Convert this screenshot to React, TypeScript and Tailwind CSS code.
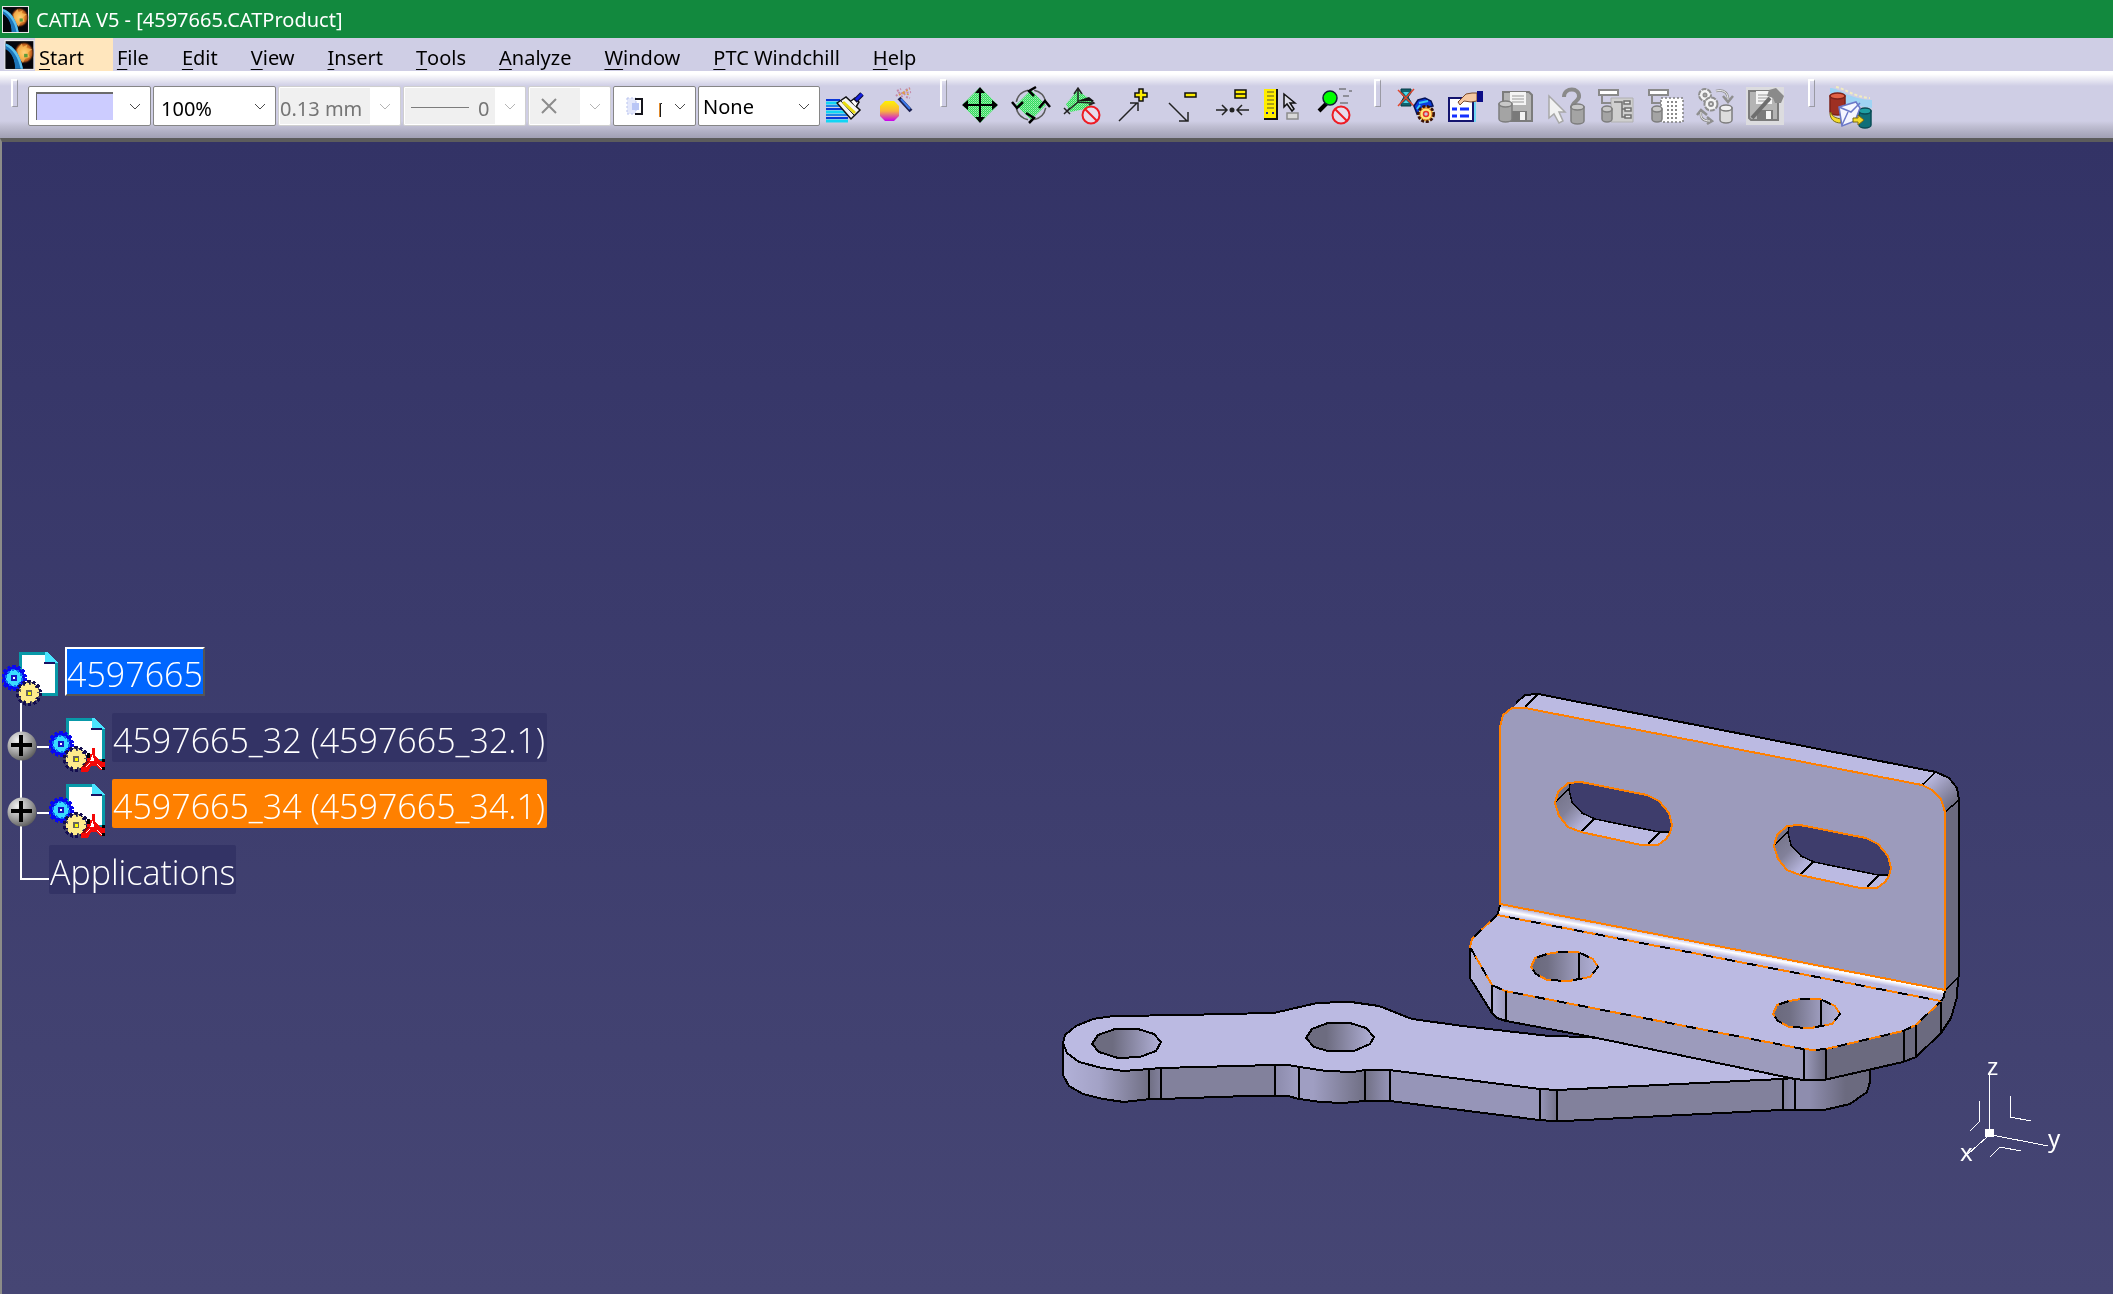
import type { ReactNode } from 'react';
import { clsx } from 'clsx';

const MENUS = [
  'File',
  'Edit',
  'View',
  'Insert',
  'Tools',
  'Analyze',
  'Window',
  'PTC Windchill',
  'Help',
];

function AppLogo({ className }: { className?: string }) {
  return (
    <svg viewBox="0 0 26 26" className={className} aria-hidden="true">
      <defs>
        <radialGradient id="burst">
          <stop offset="0" stopColor="#fff6c8" />
          <stop offset="0.4" stopColor="#f9a63a" />
          <stop offset="0.75" stopColor="#b4561a" />
          <stop offset="1" stopColor="#000000" stopOpacity="0" />
        </radialGradient>
      </defs>
      <rect width="26" height="26" fill="#e8e8e8" />
      <rect x="1" y="1" width="24" height="24" fill="#05060c" />
      <ellipse cx="17" cy="11" rx="9" ry="10" fill="url(#burst)" />
      <path d="M11 8l4-5 1 3 4-2-1 3 5 1-4 3 2 4-4 1-2 4-4-5z" fill="#fbc25e" opacity="0.7" />
      <path d="M1 3c7 2 13 10 15 22H9C9 17 6 11 1 8z" fill="#1d74b8" />
      <path d="M1 3c7 2 13 10 15 22h-2C12 15 7 8 1 5z" fill="#5cc0ee" />
      <path d="M1 8c5 3 8 9 8 17H1z" fill="#05060c" />
      <rect x="17" y="12" width="3" height="3" fill="#5e9c3a" />
    </svg>
  );
}

function MenuItem({ label, active }: { label: string; active?: boolean }) {
  return (
    <button
      type="button"
      className={clsx(
        'flex h-full items-center pt-[6px] pr-[29px] pl-1 text-[20px] leading-6 whitespace-pre text-black',
        active && 'bg-[#ffe6bd]',
      )}
    >
      <span className="underline decoration-1 underline-offset-[4px]">{label[0]}</span>
      {label.slice(1)}
    </button>
  );
}

function Grip({ className }: { className?: string }) {
  return (
    <span
      className={clsx(
        'mt-2 h-7 w-[7px] shrink-0 border-2 border-r border-b border-white border-r-[#9a9aa4] border-b-[#9a9aa4]',
        className,
      )}
    />
  );
}

type ComboProps = {
  label: string;
  value: string;
  width: string;
  disabled?: boolean;
  textClass?: string;
  children?: ReactNode;
};

function Combo({ label, value, width, disabled, textClass, children }: ComboProps) {
  return (
    <div
      className={clsx(
        'relative h-10 shrink-0 rounded-[2px] border bg-white',
        width,
        disabled ? 'border-[#cfcfcf]' : 'border-[#868686]',
      )}
    >
      <select
        aria-label={label}
        disabled={disabled}
        className={clsx(
          'h-full w-full appearance-none bg-transparent text-[20px] opacity-100 outline-none',
          disabled ? 'text-[#7c7c7c]' : 'text-black',
          textClass,
        )}
      >
        <option>{value}</option>
      </select>
      {disabled ? (
        <span className="pointer-events-none absolute inset-y-px right-[30px] left-px bg-[#f0f0f0] mix-blend-multiply" />
      ) : null}
      {children}
      <svg
        viewBox="0 0 12 8"
        className="pointer-events-none absolute top-4 right-[9px] h-2 w-3"
        fill="none"
        stroke={disabled ? '#b4b4b4' : '#4a4a4a'}
        aria-hidden="true"
      >
        <path d="M1 1l5 5 5-5" />
      </svg>
    </div>
  );
}

function Tool({ label, children }: { label: string; children: ReactNode }) {
  return (
    <button type="button" aria-label={label} className="mt-[13px] w-[50px] shrink-0">
      <svg viewBox="0 0 50 46" className="block h-[46px] w-[50px]" fill="none">
        {children}
      </svg>
    </button>
  );
}

function NoEntry() {
  return (
    <g stroke="#ee1c24" strokeWidth="2">
      <circle cx="36" cy="31" r="8.5" fill="#e6dcec" />
      <path d="M30 25l12 12" />
    </g>
  );
}

type CylinderProps = {
  x: number;
  y: number;
  w: number;
  h: number;
  fill?: string;
  top?: string;
  stroke?: string;
};

function Cylinder({ x, y, w, h, fill = '#a4a4a4', top = '#c8c8c8', stroke = '#7e7e7e' }: CylinderProps) {
  const r = w / 2;
  return (
    <g fill={fill} stroke={stroke} strokeWidth="1.5">
      <path d={`M${x} ${y + 3}v${h - 6}a${r} 3 0 0 0 ${w} 0v-${h - 6}z`} />
      <ellipse cx={x + r} cy={y + 3} rx={r} ry="3" fill={top} />
    </g>
  );
}

function Disk({ x = 12, y = 7 }: { x?: number; y?: number }) {
  return (
    <g transform={`translate(${x} ${y})`}>
      <path d="M1 1h26l3 3v26H3l-2-2z" fill="#b4b4b4" stroke="#7c7c7c" strokeWidth="2" />
      <path d="M8 1h16v13H8z" fill="#f4f4f4" />
      <path d="M10 5h12M10 8h12M10 11h12" stroke="#9a9a9a" />
      <path d="M9 20h16v10H9z" fill="#7a7a7a" />
      <path d="M18 21h5v8h-5z" fill="#f4f4f4" />
    </g>
  );
}

function TreeLines() {
  return (
    <>
      <path d="M9 6h19v5H9z" fill="#fff" stroke="#8a8a8a" strokeWidth="2" />
      <path d="M12 12v7h9" stroke="#8a8a8a" strokeWidth="2" />
    </>
  );
}

function Toolbar() {
  return (
    <div className="flex h-[67px] items-start overflow-hidden bg-[linear-gradient(#ffffff_0,#ffffff_3px,#cfcee5_15px,#cfcee5_50px,#bdbcd0_56px,#a3a2b6_66px)] pl-[11px]">
      <Grip className="mr-[10px]" />
      <div className="mt-[15px] flex gap-[2px]">
        <Combo label="Fill color" value="" width="w-[123px]">
          <span className="pointer-events-none absolute top-[5px] left-[7px] h-7 w-[77px] border-t-2 border-l border-[#6b6b6b] bg-[#ccccff]" />
        </Combo>
        <Combo label="Transparency" value="100%" width="w-[123px]" textClass="pl-[7px] pt-[6px]" />
        <Combo label="Line weight" value="0.13 mm" width="w-[123px]" disabled textClass="pl-px pt-[6px]" />
        <Combo label="Line type" value="0" width="w-[123px]" disabled textClass="pl-[74px] pt-[6px]">
          <span className="pointer-events-none absolute top-5 left-[7px] h-px w-[58px] bg-[#7c7c7c]" />
        </Combo>
        <Combo label="Point symbol" value="" width="w-[83px]" disabled>
          <svg
            viewBox="0 0 16 16"
            className="pointer-events-none absolute top-[11px] left-3 size-4"
            stroke="#8c8c8c"
            strokeWidth="2"
            aria-hidden="true"
          >
            <path d="M1 1l14 14M15 1L1 15" />
          </svg>
        </Combo>
        <Combo label="Rendering style" value="" width="w-[83px]">
          <svg
            viewBox="0 0 36 20"
            className="pointer-events-none absolute top-[10px] left-3 h-5 w-9"
            fill="none"
            aria-hidden="true"
          >
            <path d="M1 1h9v16H1z" fill="#e4e8fb" stroke="#b9c3ee" strokeDasharray="2 2" />
            <path d="M6 6h7v7H6z" fill="#b9c6f6" />
            <path d="M9 2h7v15H9" stroke="#15151c" strokeWidth="2" />
            <path d="M34.5 20V6.5h2" stroke="#1b1b1b" />
            <path d="M33.5 20V6" stroke="#e08a2c" />
          </svg>
        </Combo>
        <Combo label="Layer" value="None" width="w-[122px]" textClass="pl-1 pt-[2px]" />
      </div>
      <Tool label="Painter">
        <path d="M6 16h14M6 25h20M6 34h22" stroke="#0a36d8" strokeWidth="2" />
        <path d="M6 19h15M6 28h22M6 37h22" stroke="#12d5f4" strokeWidth="3" />
        <path d="M6 22h18M6 31h22" stroke="#1f86e8" strokeWidth="2" />
        <path d="M17 19l9-6 14 13-9 9z" fill="#f4f4f4" stroke="#111" strokeWidth="1.5" />
        <path d="M20 16l14 15" stroke="#111" />
        <path d="M23 18l12 11" stroke="#e9dc10" strokeWidth="3" />
        <path d="M31 17l4-3 4 4-3 5" fill="#fff" stroke="#111" strokeWidth="1.5" />
        <path d="M35 17L42 10" stroke="#0b0b30" strokeWidth="5" />
        <path d="M36 16L42 10" stroke="#1420e0" strokeWidth="3" />
      </Tool>
      <Tool label="Graphic properties wizard">
        <defs>
          <linearGradient id="ball" x1="0" y1="0" x2="0" y2="1">
            <stop offset="0" stopColor="#fff200" />
            <stop offset="0.5" stopColor="#f9b53c" />
            <stop offset="1" stopColor="#c800f0" />
          </linearGradient>
        </defs>
        <path d="M15 17h9l5 5v10l-5 5h-9l-5-5V22z" fill="url(#ball)" />
        <path d="M29 14L41 27" stroke="#1b2050" strokeWidth="4" />
        <path d="M31 15L40 25" stroke="#3d78e8" strokeWidth="2" />
        <path d="M26 12l4-4 3 2 3-4 4-2M31 13l5-4 5-1M36 13l4 1M27 7l4-2" stroke="#c48aa8" strokeWidth="2" strokeDasharray="2 1.5" />
        <path d="M29 11l5-3 6-3M33 9l7 2" stroke="#e0a03c" strokeWidth="1.5" strokeDasharray="2 2" />
      </Tool>
      <Grip className="mr-2 ml-5" />

      <Tool label="Translate">
        <path d="M24 4h2l16 16v2L26 38h-2L8 22v-2z" fill="url(#dither)" />
        <path d="M25 5v32M9 21h32" stroke="#000" strokeWidth="2" />
        <path d="M20 9l5-6 5 6zM20 33l5 6 5-6zM13 16l-6 5 6 5zM37 16l6 5-6 5z" fill="#000" />
      </Tool>
      <Tool label="Rotate">
        <path d="M26 6L41 21 26 36 11 21z" fill="url(#dither)" />
        <circle cx="26" cy="21" r="15" stroke="#5a5a5a" strokeWidth="1.5" strokeDasharray="17 6.5" strokeDashoffset="-3" />
        <path d="M31 3l-7 4 5 5M21 29l8 5-5 5M7 18l5 6 6-6M34 24l6-7 5 6" stroke="#000" strokeWidth="2.5" />
      </Tool>
      <Tool label="Reset compass">
        <path d="M23 6l-12 14 4 8 20-4 3-6z" fill="url(#dither)" />
        <path d="M23 5v13l14 1M23 18L10 29M19 10l4-6 4 6M34 15l5 4-5 2M9 24l6 6M9 30l6-6" stroke="#222" strokeWidth="1.5" />
        <path d="M22 17h17l-5-4z" fill="#111" />
        <NoEntry />
      </Tool>
      <Tool label="Explode in">
        <path d="M14 37L32 19M25 19h8v8" stroke="#222" strokeWidth="1.5" />
        <path d="M34 5h4v4h4v4h-4v4h-4v-4h-4V9h4z" fill="#ffee00" stroke="#111" strokeWidth="1.5" />
      </Tool>
      <Tool label="Explode out">
        <path d="M14 19L32 37M33 28v9h-9" stroke="#222" strokeWidth="1.5" />
        <path d="M30 9h11v4H30z" fill="#ffee00" stroke="#111" strokeWidth="1.5" />
      </Tool>
      <Tool label="Align">
        <path d="M11 26h10M17 21l5 5-5 5M44 26H32M37 21l-5 5 5 5" stroke="#222" strokeWidth="1.5" />
        <circle cx="27" cy="26" r="2.5" fill="#222" />
        <path d="M30 6h11v8H30zM30 10h11" fill="#ffee00" stroke="#111" strokeWidth="1.5" />
      </Tool>
      <Tool label="Measure">
        <path d="M9 5h13v30H9z" fill="#ffee00" />
        <path d="M22 5v30H9" stroke="#111" strokeWidth="2" />
        <path d="M12 8h7M12 12h7M12 16h7M12 20h7M12 24h7" stroke="#8e8620" strokeWidth="1.5" />
        <path d="M11 29h2M17 29h2" stroke="#1c2a9a" strokeWidth="2" />
        <path d="M29 10v13l3-3 5 7 2-2-4-6h5z" fill="#dcdce8" stroke="#111" strokeWidth="1.5" />
        <path d="M32 29h11v6H32z" fill="#d8d8d8" stroke="#8c8c8c" strokeWidth="1.5" />
      </Tool>
      <Tool label="Stop search">
        <path d="M14 27l8-8" stroke="#000" strokeWidth="4" />
        <path d="M34 5h7M38 12h6M44 7h3M35 19h8" stroke="#8e8e98" strokeWidth="2" />
        <circle cx="25" cy="14" r="7" fill="#00ff00" stroke="#123" strokeWidth="1.5" />
        <NoEntry />
      </Tool>
      <Grip className="mr-[9px] ml-[19px]" />

      <Tool label="Cancel update">
        <path d="M11 5h10v4l-3 4 3 5v4H11v-4l3-5-3-4z" fill="#10636e" stroke="#063b44" />
        <path d="M13 8h6l-3 4zM13 19h6l-3-3z" fill="#4fd6e8" />
        <path d="M8 6l16 16M24 5L8 22" stroke="#e0452c" strokeWidth="1.5" />
        <path d="M24 22l4-6 7-2 6 3 2 5-8 2-8 6z" fill="#0a3ce0" stroke="#061458" strokeWidth="1.5" />
        <path d="M29 19l9-2M27 25l3-4" stroke="#35c8f0" strokeWidth="2" />
        <circle cx="36" cy="30" r="7.5" fill="#ffe35a" stroke="#3a1208" strokeWidth="3" strokeDasharray="3 1.5" />
        <circle cx="36" cy="30" r="6" fill="#ffe77a" stroke="#e07a28" />
        <circle cx="36" cy="30" r="2.5" fill="#c8c4dc" stroke="#e9322a" strokeWidth="1.5" />
      </Tool>
      <Tool label="Properties">
        <path d="M9 14h24v23H9z" fill="#fff" stroke="#14146e" strokeWidth="2" />
        <path d="M35 16v22" stroke="#6fd8f4" strokeWidth="2" />
        <path d="M12 25h5M20 25h9M12 32h5M20 32h9" stroke="#1430ff" strokeWidth="3" />
        <path d="M18 18l8-8 6-1h5v8l-6 1-7-1-4 4z" fill="#f5c8a2" stroke="#7a4a2c" />
        <path d="M37 7h6v11h-6z" fill="#0c0c86" />
      </Tool>
      <Tool label="Save in database">
        <Disk />
        <Cylinder x={9} y={17} w={13} h={21} />
      </Tool>
      <Tool label="What is this object">
        <path d="M9 12v22l5-4 5 9 4-2-4-9h6z" fill="#f2f2f2" stroke="#a8a8a8" strokeWidth="1.5" />
        <path d="M24 13c0-10 16-10 15 0-1 5-7 5-7 11" stroke="#8a8a8a" strokeWidth="4" />
        <Cylinder x={31} y={20} w={13} h={20} />
      </Tool>
      <Tool label="Open structure">
        <path d="M21 14h22v24H21z" fill="#cfcfcf" stroke="#b0b0b0" />
        <TreeLines />
        <path d="M24 18h8v15h4M32 25h4" stroke="#707070" strokeWidth="1.5" />
        <path d="M34 17h6v3h-6zM35 24h6v3h-6zM35 31h6v3h-6z" fill="#eee" stroke="#707070" strokeWidth="1.5" />
        <Cylinder x={12} y={22} w={10} h={16} />
      </Tool>
      <Tool label="Open partial structure">
        <path d="M21 14h22v24H21z" fill="#fff" stroke="#7e7e7e" strokeWidth="1.5" strokeDasharray="2 2" />
        <TreeLines />
        <path d="M27 18h12M27 22h12M27 26h12M27 30h12M27 34h12" stroke="#8a8a8a" strokeWidth="2" strokeDasharray="2 2" />
        <Cylinder x={12} y={22} w={10} h={16} />
      </Tool>
      <Tool label="Synchronize">
        <g stroke="#8f8f8f" strokeWidth="2" fill="#f4f4f4">
          <circle cx="15" cy="11" r="6" strokeDasharray="5 1" />
          <circle cx="21" cy="20" r="6.5" strokeDasharray="5 1" />
          <circle cx="15" cy="11" r="1.5" />
          <circle cx="21" cy="20" r="2" />
        </g>
        <path d="M26 7c9-2 12 3 12 8M33 12l5 6 5-6M11 28c-1 6 2 9 9 9M7 31l4-5 6 5M17 33l5 4-5 3" stroke="#8f8f8f" strokeWidth="2.5" />
        <path d="M26 7c9-2 12 3 12 8M11 28c-1 6 2 9 9 9" stroke="#f4f4f4" />
        <Cylinder x={30} y={21} w={12} h={18} fill="#dcdcdc" top="#f0f0f0" />
      </Tool>
      <Tool label="Save management">
        <path d="M6 3h38v38H6z" fill="#dcdcdf" />
        <Disk x={8} y={6} />
        <path d="M12 34l18-20" stroke="#6e6e6e" strokeWidth="4" />
        <path d="M29 6l7-2 8 8-3 7h-6l-2-5-6-2z" fill="#8a8a8a" />
      </Tool>
      <Grip className="mr-[11px] ml-[18px]" />

      <Tool label="Send to">
        <path d="M4 4c10 0 18 11 42 12v8L20 20 4 9z" fill="#9fd4f4" />
        <path d="M10 3c10 2 18 10 34 11" stroke="#f2ecc0" strokeWidth="2" strokeDasharray="3 2" />
        <Cylinder x={4} y={9} w={15} h={22} fill="#9e2f22" top="#e06244" stroke="#7c2218" />
        <Cylinder x={33} y={24} w={12} h={20} fill="#0f6f78" top="#1ea0a4" stroke="#0b4d57" />
        <path d="M5 28c1 5 5 6 10 7v4c-7 0-11-4-11-10z" fill="#f4dc2c" stroke="#7a6a10" />
        <path d="M13 23l17-5 4 6-5 13-13 5z" fill="#f4f6ff" stroke="#6a78c8" strokeWidth="1.5" />
        <path d="M13 23l12 5 9-9M16 41l6-13" stroke="#6a78c8" strokeWidth="1.5" />
        <path d="M27 34h5v-3l6 5-6 5v-3h-5z" fill="#f4dc2c" stroke="#7a6a10" />
      </Tool>

      <svg width="0" height="0" aria-hidden="true">
        <defs>
          <pattern id="dither" width="2" height="2" patternUnits="userSpaceOnUse">
            <rect width="2" height="2" fill="#2fdc5c" />
            <rect width="1" height="1" fill="#a4efb4" />
            <rect x="1" y="1" width="1" height="1" fill="#7ce894" />
          </pattern>
        </defs>
      </svg>
    </div>
  );
}

// Document page with the two product gears; parts carry the red part mark as well.
function NodeIcon({ part }: { part?: boolean }) {
  return (
    <svg viewBox="0 0 56 56" className="mt-[5px] h-14 w-14 shrink-0" shapeRendering="crispEdges" aria-hidden="true">
      <path d="M18 1h26l10 10v31H18z" fill="#fff" stroke="#0899a8" strokeWidth="3" />
      <path d="M43 0h2l11 11H43z" fill="#4ae4ff" />
      <path d="M42 10h11v2H42z" fill="#1a1060" />
      <circle cx="12" cy="26" r="11" stroke="#0808f0" strokeWidth="4" strokeDasharray="3 2" fill="#0808f0" />
      <circle cx="12" cy="26" r="8" fill="#3adcff" stroke="#0a70f0" strokeWidth="2" strokeDasharray="3 2" />
      <path d="M9 23h6v6H9z" fill="#1414c0" />
      <path d="M11 25h2v2h-2z" fill="#fff" />
      <circle cx="27" cy="41" r="11" stroke="#140e50" strokeWidth="4" strokeDasharray="3 2" fill="#5c5a60" />
      <circle cx="27" cy="41" r="8.5" fill="#ffec8c" stroke="#ffec8c" strokeWidth="3" strokeDasharray="4 2" />
      <path d="M24 38h6v6h-6z" fill="#66645c" />
      <path d="M26 40h3v3h-3z" fill="#ffff00" />
      {part ? (
        <>
          <path d="M43 30h3v7l5 6h5v9h-5l-4-4h-5l-3 6h-7v-4l5-6 3-8h3z" fill="#f40808" />
          <path d="M44 36l1 7h-4z" fill="#fff" />
          <path d="M37 49l4-4M48 46l5 5" stroke="#fff" />
          <path d="M38 35h3v5h-3zM53 41h3v3h-3zM53 49h3v3h-3z" fill="#000" />
          <path d="M34 49l5-6" stroke="#900808" strokeWidth="2" />
        </>
      ) : null}
    </svg>
  );
}

function Expander({ name }: { name: string }) {
  return (
    <button type="button" aria-label={`Expand ${name}`} className="mt-[18px] shrink-0">
      <svg viewBox="0 0 30 30" className="block size-[30px]">
        <defs>
          <radialGradient id="knob" cx="0.35" cy="0.3" r="0.8">
            <stop offset="0" stopColor="#f0f0f0" />
            <stop offset="0.5" stopColor="#a8a8a8" />
            <stop offset="1" stopColor="#505050" />
          </radialGradient>
        </defs>
        <circle cx="15" cy="15" r="14.5" fill="url(#knob)" />
        <path d="M4 14h21M14 4v21" stroke="#000" strokeWidth="4" />
      </svg>
    </button>
  );
}

type PartNodeProps = { name: string; selected?: boolean };

function PartNode({ name, selected }: PartNodeProps) {
  return (
    <li className="relative flex h-[49px] items-start pl-[5px]">
      <Expander name={name} />
      <span className="mt-[33px] h-[2px] w-[12px] bg-white" />
      <NodeIcon part />
      <span
        className={clsx(
          'ml-[7px] h-[49px] rounded-[2px] pr-[2px] pl-px leading-[54px]',
          selected ? 'bg-[#ff8000]' : 'bg-[#333365]',
        )}
      >
        {name}
      </span>
    </li>
  );
}

function SpecTree() {
  return (
    <ul className="relative mt-[505px] flex shrink-0 flex-col items-start gap-[17px] self-start font-['Open_Sans','Noto_Sans',sans-serif] text-[34px] font-[350] whitespace-nowrap text-white">
      <li className="absolute top-14 left-[18px] h-[177px] w-[29px] border-b-2 border-l-2 border-white" aria-hidden="true" />
      <li className="relative flex h-[49px] items-start">
        <NodeIcon />
        <span className="ml-[7px] h-[49px] border-2 border-white border-r-[#555] border-b-[#555] bg-[#0066ff] leading-[50px]">
          4597665
        </span>
      </li>
      <PartNode name="4597665_32 (4597665_32.1)" />
      <PartNode name="4597665_34 (4597665_34.1)" selected />
      <li className="relative ml-[47px] h-[49px] rounded-[2px] bg-[#333365] px-px leading-[54px]">
        Applications
      </li>
    </ul>
  );
}

const SLOT_RIM =
  'M1568 783L1581 782 1647 795 1659 801 1669 813 1672 825 1670 833 1666 839 1658 845 1641 845 1581 832 1568 827 1559 816 1555 803 1558 792Z';

function Slot({ dx = 0, dy = 0 }: { dx?: number; dy?: number }) {
  return (
    <g transform={`translate(${dx} ${dy})`}>
      <path d={SLOT_RIM} fill="url(#slotWall)" />
      <path
        d="M1570 783L1581 782 1647 795 1659 801 1669 813 1672 825 1670 832 1659 832 1595 819 1582 813 1572 802 1569 790Z"
        fill="#3e3d6c"
      />
      <path
        d="M1570 783L1569 790 1572 802 1582 813 1595 819 1659 832H1670M1568 790L1556 801M1594 819L1581 832M1660 832L1648 844"
        stroke="#000"
        strokeWidth="1.5"
      />
      <path d={SLOT_RIM} stroke="#ff8000" strokeWidth="2" />
    </g>
  );
}

const BASE_HOLE =
  'M1531 967L1535 958 1547 954 1559 952 1578 952 1593 959 1598 967 1590 977 1579 979 1569 981 1547 980 1536 974Z';

function BaseHole({ dx = 0, dy = 0 }: { dx?: number; dy?: number }) {
  return (
    <g transform={`translate(${dx} ${dy})`}>
      <path d={BASE_HOLE} fill="url(#baseHole)" stroke="#000" strokeWidth="2" />
      <path d={BASE_HOLE} stroke="#ff8000" strokeWidth="2" strokeDasharray="12 10" />
      <path d="M1579 953V979" stroke="#000" strokeWidth="2" />
    </g>
  );
}

const BASE_EDGE =
  'M1941 1001L1497 915 1472 939 1470 947 1492 985 1505 991 1803 1049 1815 1050 1826 1049 1903 1031 1916 1025 1941 1001';

function Model() {
  return (
    <svg
      viewBox="1050 680 1063 500"
      className="mt-[538px] ml-auto h-[500px] w-[1063px] shrink-0"
      fill="none"
      role="img"
      aria-label="Bracket assembly"
    >
      <defs>
        <linearGradient id="armSide" gradientUnits="userSpaceOnUse" x1="1063" y1="0" x2="1870" y2="0">
          <stop offset="0" stopColor="#b2b1d8" />
          <stop offset="0.045" stopColor="#a3a2c6" />
          <stop offset="0.107" stopColor="#706f84" />
          <stop offset="0.121" stopColor="#82819c" />
          <stop offset="0.263" stopColor="#82819c" />
          <stop offset="0.263" stopColor="#8c8bac" />
          <stop offset="0.292" stopColor="#9f9ec2" />
          <stop offset="0.31" stopColor="#9f9ec2" />
          <stop offset="0.374" stopColor="#706f84" />
          <stop offset="0.405" stopColor="#9695b8" />
          <stop offset="0.591" stopColor="#9695b8" />
          <stop offset="0.612" stopColor="#74738a" />
          <stop offset="0.612" stopColor="#82819c" />
          <stop offset="0.892" stopColor="#82819c" />
          <stop offset="0.907" stopColor="#8e8dae" />
          <stop offset="0.925" stopColor="#8e8dae" />
          <stop offset="0.97" stopColor="#6b6a7f" />
          <stop offset="1" stopColor="#6b6a7f" />
        </linearGradient>
        <linearGradient id="baseSide" gradientUnits="userSpaceOnUse" x1="1470" y1="0" x2="1959" y2="0">
          <stop offset="0" stopColor="#b2b1d8" />
          <stop offset="0.05" stopColor="#b0afd5" />
          <stop offset="0.074" stopColor="#9c9bbc" />
          <stop offset="0.683" stopColor="#9c9bbc" />
          <stop offset="0.728" stopColor="#6b6a7f" />
          <stop offset="1" stopColor="#6b6a7f" />
        </linearGradient>
        <linearGradient id="hole">
          <stop offset="0" stopColor="#6d6c80" />
          <stop offset="0.3" stopColor="#6d6c80" />
          <stop offset="1" stopColor="#b2b1d8" />
        </linearGradient>
        <linearGradient id="baseHole">
          <stop offset="0" stopColor="#6a697c" />
          <stop offset="0.25" stopColor="#706f84" />
          <stop offset="0.7" stopColor="#9c9bbc" />
          <stop offset="1" stopColor="#b2b1d8" />
        </linearGradient>
        <linearGradient id="slotWall" gradientUnits="userSpaceOnUse" x1="1558" y1="798" x2="1590" y2="828">
          <stop offset="0" stopColor="#77768c" />
          <stop offset="0.35" stopColor="#82819a" />
          <stop offset="0.8" stopColor="#b2b1d8" />
          <stop offset="1" stopColor="#bbbae2" />
        </linearGradient>
        <linearGradient id="bend" gradientUnits="userSpaceOnUse" x1="1500" y1="904" x2="1498" y2="915">
          <stop offset="0" stopColor="#a6a5c6" />
          <stop offset="0.3" stopColor="#d6d5ee" />
          <stop offset="0.55" stopColor="#ffffff" />
          <stop offset="1" stopColor="#bbbae2" />
        </linearGradient>
        <linearGradient id="corner" gradientUnits="userSpaceOnUse" x1="1926" y1="780" x2="1952" y2="808">
          <stop offset="0" stopColor="#bbbae2" />
          <stop offset="1" stopColor="#6b6a7f" />
        </linearGradient>
      </defs>

      <g shapeRendering="crispEdges">
        {/* arm */}
        <path
          d="M1063 1043V1075L1069 1086 1083 1094 1103 1099 1124 1102 1150 1099 1161 1099 1248 1096 1288 1096 1299 1099 1320 1102 1343 1103 1365 1101 1390 1101 1539 1120 1552 1121 1564 1121 1781 1110 1824 1110 1850 1104 1867 1092 1870 1082V1060H1780L1556 1080 1389 1060H1100Z"
          fill="url(#armSide)"
          stroke="#000"
          strokeWidth="2"
        />
        <path
          d="M1063 1043L1065 1035 1076 1026 1093 1019 1113 1016 1187 1015 1222 1014 1274 1013 1317 1003 1343 1002 1351 1002 1379 1006 1412 1019 1463 1026 1549 1036 1587 1037 1796 1060V1078L1781 1079 1557 1090 1540 1089 1389 1070 1365 1070 1353 1072 1326 1071 1300 1067 1288 1065 1274 1065 1161 1068 1150 1069 1124 1071 1102 1068 1079 1062 1067 1053Z"
          fill="#bbbae2"
          stroke="#000"
          strokeWidth="2"
        />
        <path
          d="M1149 1069V1099M1161 1068V1099M1275 1065V1096M1299 1067V1099M1365 1070V1101M1390 1070V1101M1540 1089V1120M1557 1090V1121M1783 1079V1110M1795 1078V1110"
          stroke="#000"
          strokeWidth="2"
        />
        <path
          d="M1092 1044L1098 1035 1115 1029 1138 1029 1154 1034 1161 1042 1156 1051 1140 1057 1118 1058 1099 1052Z"
          fill="url(#hole)"
          stroke="#000"
          strokeWidth="2"
        />
        <path
          d="M1306 1038L1312 1029 1328 1023 1350 1023 1366 1028 1374 1037 1370 1044 1354 1051 1328 1051 1314 1047Z"
          fill="url(#hole)"
          stroke="#000"
          strokeWidth="2"
        />

        {/* bracket base */}
        <path
          d="M1470 947V978L1492 1013 1497 1018 1506 1021 1592 1037 1795 1079 1805 1080 1824 1080 1903 1062 1916 1057 1941 1033 1951 1018 1957 997 1958 977 1945 990 1600 900Z"
          fill="url(#baseSide)"
          stroke="#000"
          strokeWidth="2"
        />
        <path d={BASE_EDGE} fill="#bbbae2" stroke="#000" strokeWidth="2" />
        <path d={BASE_EDGE} stroke="#ff8000" strokeWidth="2" strokeDasharray="12 10" />
        <path
          d="M1492 985V1013M1506 991V1021M1804 1049V1080M1826 1049V1079M1904 1031V1062M1916 1025V1057M1941 1002V1033"
          stroke="#000"
          strokeWidth="2"
        />
        <BaseHole />
        <BaseHole dx={242} dy={47} />

        {/* bend and upright plate */}
        <path d="M1500 904L1945 990 1943 997 1941 1000 1497 914 1499 910Z" fill="url(#bend)" />
        <path d="M1500 904L1499 910 1497 915M1945 990L1944 997 1941 1001" stroke="#000" strokeWidth="2" />
        <path
          d="M1512 708L1525 695 1538 694 1936 772 1949 778 1957 788 1959 800V977L1945 990V812L1922 785Z"
          fill="#bbbae2"
        />
        <path d="M1936 772L1949 778 1957 788 1959 800 1945 812 1941 799 1932 790 1922 785Z" fill="url(#corner)" />
        <path d="M1959 800V977L1945 990V812Z" fill="#6b6a7f" />
        <path
          d="M1516 703L1525 695 1538 694 1936 772 1949 778 1957 788 1959 800V977"
          stroke="#000"
          strokeWidth="2"
        />
        <path
          d="M1538 694L1525 707M1936 772L1922 785M1959 800L1945 812M1959 977L1945 990"
          stroke="#000"
          strokeWidth="1.5"
        />
        <path
          d="M1500 904V727L1503 715 1512 708H1525L1922 785 1932 790 1941 799 1945 812V990Z"
          fill="#9c9bbc"
          stroke="#ff8000"
          strokeWidth="2"
        />
        <Slot />
        <Slot dx={219} dy={43} />

        {/* axis triad */}
        <path
          d="M1989 1074V1130M1992 1135L2048 1146M1987 1137L1968 1154M1979 1101V1122L1970 1131M2010 1096V1117L2031 1121M1990 1157L2000 1147 2021 1151"
          stroke="#fff"
        />
        <path d="M1985 1129h9v8h-9z" fill="#fff" />
      </g>
      <g fill="#fff" className="text-[24px]">
        <text x="1987" y="1075">z</text>
        <text x="2048" y="1147">y</text>
        <text x="1960" y="1161">x</text>
      </g>
    </svg>
  );
}

export default function App() {
  return (
    <div className="flex min-h-screen flex-col overflow-hidden font-['Noto_Sans','Open_Sans',sans-serif]">
      <header>
        <div className="flex h-[38px] items-center gap-[7px] bg-[#12893e] pl-[2px] text-[20px] text-white">
          <AppLogo className="size-[27px]" />
          <h1 className="pt-[2px]">CATIA V5 - [4597665.CATProduct]</h1>
        </div>
        <nav className="flex h-[33px] items-center bg-[#cfcee5] pl-1">
          <AppLogo className="h-[30px] w-[31px]" />
          <MenuItem label="Start" active />
          {MENUS.map((label) => (
            <MenuItem key={label} label={label} />
          ))}
        </nav>
        <Toolbar />
      </header>
      <main className="flex grow border-t-4 border-l-2 border-t-[#5c5c5c] border-l-[#8c8c88] bg-[linear-gradient(#333366,#464674)]">
        <SpecTree />
        <Model />
      </main>
    </div>
  );
}
